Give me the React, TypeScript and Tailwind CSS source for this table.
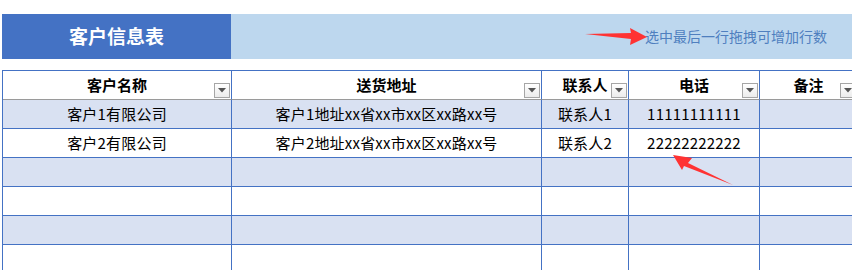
import React from "react";

const cols = ["客户名称", "送货地址", "联系人", "电话", "备注"];

const rows: string[][] = [
  ["客户1有限公司", "客户1地址xx省xx市xx区xx路xx号", "联系人1", "11111111111", ""],
  ["客户2有限公司", "客户2地址xx省xx市xx区xx路xx号", "联系人2", "22222222222", ""],
  ["", "", "", "", ""],
  ["", "", "", "", ""],
  ["", "", "", "", ""],
  ["", "", "", "", ""],
];

function FilterButton() {
  return (
    <div className="absolute right-[1px] bottom-[1px] w-[16px] h-[15px] border border-[#a6a6a6] bg-gradient-to-b from-white to-[#ececec] flex items-center justify-center">
      <svg width="8" height="5" viewBox="0 0 8 5">
        <path d="M0 0h8L4 4.5z" fill="#555" />
      </svg>
    </div>
  );
}

export default function App() {
  return (
    <div
      className="relative w-[852px] h-[270px] overflow-hidden bg-white"
      style={{ fontFamily: '"Noto Sans CJK SC", "Noto Sans", sans-serif' }}
    >
      {/* Title bar */}
      <div className="mt-[14px] ml-[2px] flex h-[45px]">
        <div className="w-[229px] bg-[#4472c4] flex items-center justify-center text-white font-bold text-[19px]">
          客户信息表
        </div>
        <div className="flex-1 bg-[#bdd7ee] flex items-center justify-end pr-[25px] text-[14px] text-[#4f7fbf]">
          选中最后一行拖拽可增加行数
        </div>
      </div>

      {/* Table */}
      <div className="mt-[11px] ml-[2px] w-[856px] border-l border-t border-[#4472c4] grid grid-cols-[229px_310px_87px_131px_98px]">
        {cols.map((c) => (
          <div
            key={c}
            className="relative h-[29px] border-b border-b-[#9a9a9a] border-r border-r-[#4472c4] flex items-center justify-center font-bold text-[15px] text-black"
          >
            {c}
            <FilterButton />
          </div>
        ))}
        {rows.map((r, ri) =>
          r.map((v, ci) => (
            <div
              key={ri + "-" + ci}
              className={
                "h-[29px] border-b border-r border-[#4472c4] flex items-center justify-center text-[15px] text-black tracking-[0.2px] " +
                (ri % 2 === 0 ? "bg-[#d9e1f2]" : "bg-white")
              }
            >
              {v}
            </div>
          ))
        )}
      </div>

      {/* Red arrows */}
      <svg className="absolute left-0 top-0 pointer-events-none" width="852" height="270">
        <polygon points="585,34 631,33 630,28 647,37 630,45 631,39" fill="#ff3333" />
        <polygon points="673,155 692,158 688,163 733,185 684,166 682,170" fill="#ff3333" />
      </svg>
    </div>
  );
}
